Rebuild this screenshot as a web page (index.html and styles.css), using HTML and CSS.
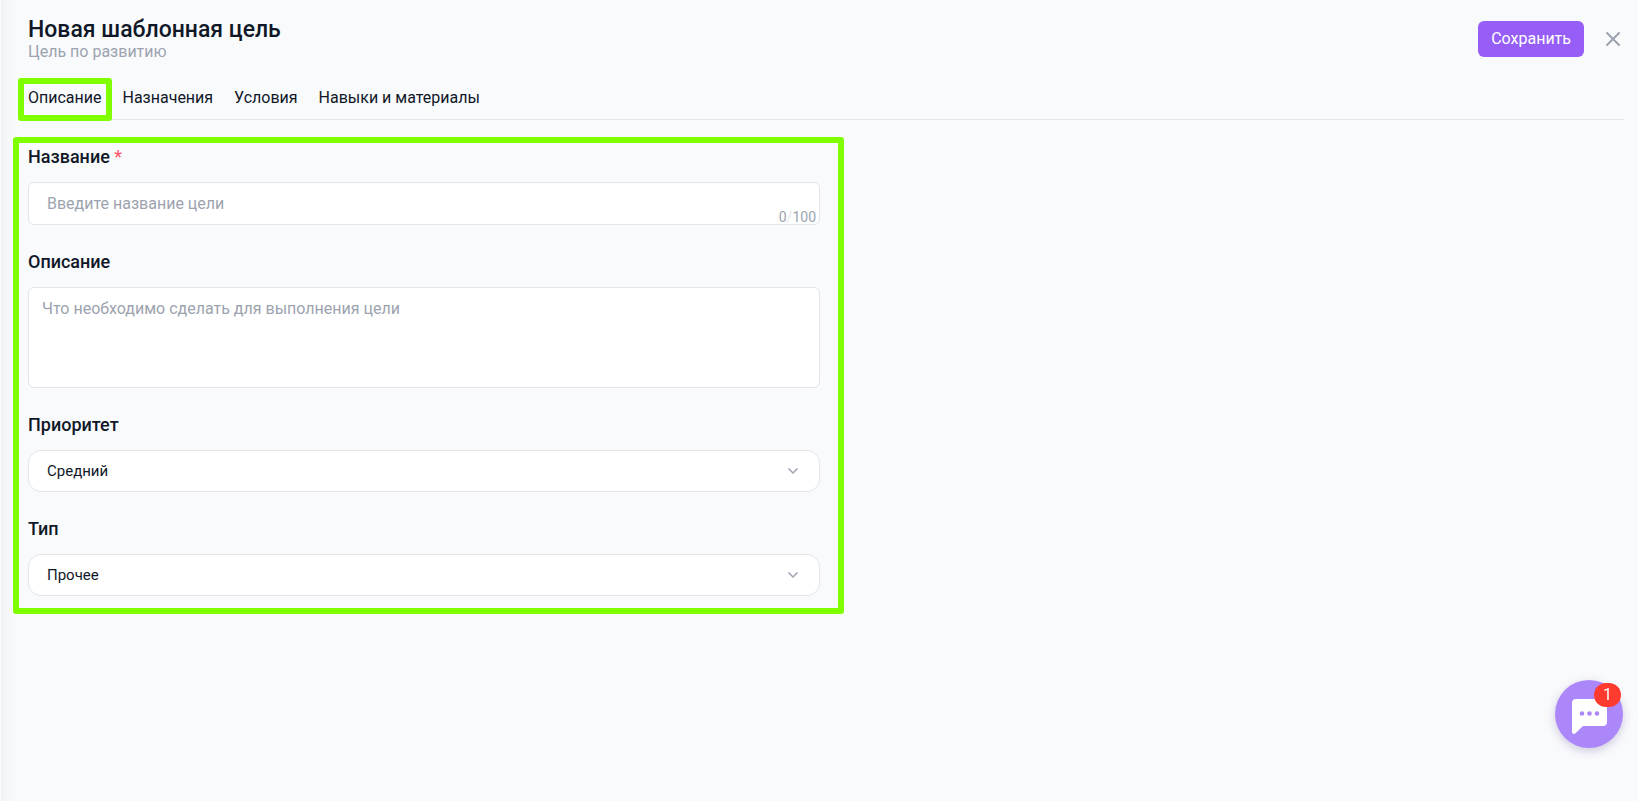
FILE: index.html
```html
<!DOCTYPE html>
<html lang="ru">
<head>
  <meta charset="utf-8">
  <meta name="viewport" content="width=device-width, initial-scale=1">
  <title>Новая шаблонная цель</title>
  <link rel="stylesheet" href="styles.css">
</head>
<body>

<main class="panel">
  <header class="header">
    <div>
      <h1 class="title">Новая шаблонная цель</h1>
      <p class="subtitle">Цель по развитию</p>
    </div>
    <div class="actions">
      <button type="submit" form="goal" class="save">Сохранить</button>
      <button type="button" class="close" aria-label="Закрыть">
        <svg width="22" height="22" viewBox="0 0 22 22"><path d="M5 5l12 12M17 5L5 17"/></svg>
      </button>
    </div>
  </header>

  <nav class="tabs">
    <a href="#goal" class="tab marked">Описание</a>
    <a href="#assign" class="tab">Назначения</a>
    <a href="#terms" class="tab">Условия</a>
    <a href="#skills" class="tab">Навыки и материалы</a>
  </nav>

  <div class="columns">
    <form id="goal" class="form marked">
      <div class="field">
        <label for="name">Название <span class="required">*</span></label>
        <div class="control">
          <input id="name" class="box" type="text" maxlength="100" placeholder="Введите название цели">
          <span class="counter">0<i>/</i>100</span>
        </div>
      </div>
      <div class="field">
        <label for="about">Описание</label>
        <textarea id="about" class="box" placeholder="Что необходимо сделать для выполнения цели"></textarea>
      </div>
      <div class="field">
        <label for="priority">Приоритет</label>
        <div class="control">
          <select id="priority" class="box">
            <option>Средний</option>
          </select>
          <svg class="arrow" width="12" height="8" viewBox="0 0 12 8"><path d="M1.500 1.500L6 6l4.500-4.500"/></svg>
        </div>
      </div>
      <div class="field">
        <label for="type">Тип</label>
        <div class="control">
          <select id="type" class="box">
            <option>Прочее</option>
          </select>
          <svg class="arrow" width="12" height="8" viewBox="0 0 12 8"><path d="M1.500 1.500L6 6l4.500-4.500"/></svg>
        </div>
      </div>
    </form>
  </div>
</main>

<button type="button" class="chat" aria-label="Чат">
  <svg width="68" height="68" viewBox="0 0 68 68">
    <path fill="#fff" d="M21 19h27a4 4 0 0 1 4 4v19a4 4 0 0 1-4 4H28l-7.500 7.300c-1.500 1.200-3.500.6-3.500-1.500V23a4 4 0 0 1 4-4z"/>
    <g fill="#ac87fa"><circle cx="27" cy="33.500" r="2.300"/><circle cx="34.500" cy="33.500" r="2.300"/><circle cx="42" cy="33.500" r="2.300"/></g>
  </svg>
  <span class="badge">1</span>
</button>

</body>
</html>
```

FILE: styles.css
```css
* {
  box-sizing: border-box;
}

body {
  margin: 0;
  background: #f9fafc;
  color: #101828;
  font: 16px/24px Roboto, "Noto Sans", sans-serif;
}

button, input, textarea, select {
  font: inherit;
  color: inherit;
}

.panel {
  min-height: 100vh;
  margin-left: 1px;
  padding: 17px 14px 24px 27px;
  background: linear-gradient(to right, #f2f3f5, #f9fafc 14px);
}

/* header */
.header {
  display: flex;
  justify-content: space-between;
  align-items: center;
}

.title {
  margin: 0;
  font-size: 23px;
  line-height: 26px;
  font-weight: 500;
}

.subtitle {
  margin: 0;
  line-height: 18px;
  color: #9ca3af;
}

.actions {
  display: flex;
  align-items: center;
  gap: 18px;
}

.save {
  height: 36px;
  padding: 0 13px;
  border: 0;
  border-radius: 6px;
  background: #965ef6;
  color: #fff;
}

.close {
  display: flex;
  padding: 0;
  border: 0;
  background: none;
}

.close svg {
  fill: none;
  stroke: #9ca3af;
  stroke-width: 2;
  stroke-linecap: round;
}

/* tabs */
.tabs {
  display: flex;
  gap: 21px;
  margin-top: 25px;
  padding-bottom: 9px;
  border-bottom: 1px solid #e3e5e9;
}

.tab {
  color: inherit;
  text-decoration: none;
}

/* green frame round the active tab and the form */
.marked {
  position: relative;
}

.marked::after {
  content: "";
  position: absolute;
  border: 6px solid #80ff00;
  border-radius: 3px;
  pointer-events: none;
}

.tab.marked::after {
  inset: -8px -10px -11px;
}

.form.marked::after {
  inset: -6px -24px -18px -15px;
}

/* form */
.columns {
  display: grid;
  grid-template-columns: 1fr 1fr;
  gap: 12px;
  padding-top: 23px;
}

.form {
  display: flex;
  flex-direction: column;
  gap: 23px;
}

.field {
  display: flex;
  flex-direction: column;
  gap: 11px;
}

.field label {
  font-size: 18px;
  line-height: 28px;
  font-weight: 500;
}

.required {
  color: #fb5566;
  font-weight: 400;
}

.control {
  position: relative;
  display: flex;
}

.box {
  width: 100%;
  height: 43px;
  padding: 0 18px 1px;
  border: 1px solid #e3e5e9;
  border-radius: 6px;
  background: #fff;
}

.box::placeholder {
  color: #9ca3af;
  opacity: 1;
}

textarea.box {
  display: block;
  height: 101px;
  padding: 9px 13px;
  resize: none;
}

select.box {
  height: 42px;
  padding-bottom: 0;
  border-radius: 13px;
  font-size: 15px;
  appearance: none;
}

.counter {
  position: absolute;
  right: 4px;
  bottom: 0;
  font-size: 14px;
  line-height: 16px;
  color: #9ca3af;
}

.counter i {
  font-style: normal;
  color: #e3e5e9;
}

.arrow {
  position: absolute;
  top: 17px;
  right: 21px;
  fill: none;
  stroke: #9ca3af;
  stroke-width: 1.5;
  pointer-events: none;
}

/* chat */
.chat {
  position: fixed;
  right: 15px;
  bottom: 53px;
  width: 68px;
  height: 68px;
  padding: 0;
  border: 0;
  border-radius: 50%;
  background: #ac87fa;
  box-shadow: 0 3px 10px rgba(80, 60, 140, .25);
}

.chat svg {
  display: block;
}

.badge {
  position: absolute;
  top: 3px;
  right: 2px;
  width: 27px;
  height: 24px;
  border-radius: 12px;
  background: #ff3b30;
  color: #fff;
}
```
